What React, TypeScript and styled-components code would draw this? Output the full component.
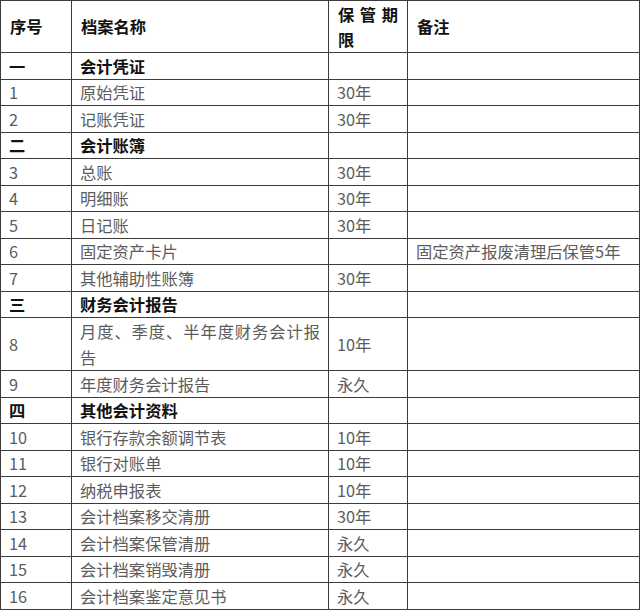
import React from "react";
import styled, { createGlobalStyle } from "styled-components";

const GlobalStyle = createGlobalStyle`
  html, body { margin: 0; padding: 0; background: #ffffff; }
  body { font-family: "Noto Sans CJK SC", "Noto Sans", sans-serif; }
`;

const Page = styled.div`
  width: 640px;
  height: 610px;
  background: #ffffff;
  overflow: hidden;
`;

const Table = styled.table`
  width: 639px;
  border-collapse: collapse;
  table-layout: fixed;
  font-family: "Noto Sans CJK SC", "Noto Sans", sans-serif;
  font-size: 16.3px;
  color: #5a5a5a;
`;

const HeadRow = styled.tr`
  height: 52px;
`;

const Row = styled.tr<{ $double?: boolean }>`
  height: ${(p) => (p.$double ? "52.8px" : "26.5px")};
  line-height: ${(p) => (p.$double ? "26px" : "24px")};
`;

const HeadCell = styled.th`
  border: 1px solid #3c3c3c;
  padding: 0 9px 0 9px;
  text-align: justify;
  text-align-last: left;
  vertical-align: middle;
  font-weight: 700;
  color: #111111;
  line-height: 25px;
`;

const Cell = styled.td<{ $bold?: boolean }>`
  border: 1px solid #3c3c3c;
  padding: 0 8px 0 8px;
  text-align: justify;
  text-align-last: left;
  vertical-align: middle;
  font-weight: ${(p) => (p.$bold ? 700 : 400)};
  color: ${(p) => (p.$bold ? "#111111" : "#5c5c5c")};
  white-space: normal;
  word-break: break-all;
`;

const NoteCell = styled(Cell)`
  padding-left: 8px;
  padding-right: 4px;
  white-space: nowrap;
`;

type Item = {
  no: string;
  name: string;
  term?: string;
  note?: string;
  section?: boolean;
  double?: boolean;
};

const rows: Item[] = [
  { no: "一", name: "会计凭证", section: true },
  { no: "1", name: "原始凭证", term: "30年" },
  { no: "2", name: "记账凭证", term: "30年" },
  { no: "二", name: "会计账簿", section: true },
  { no: "3", name: "总账", term: "30年" },
  { no: "4", name: "明细账", term: "30年" },
  { no: "5", name: "日记账", term: "30年" },
  { no: "6", name: "固定资产卡片", note: "固定资产报废清理后保管5年" },
  { no: "7", name: "其他辅助性账簿", term: "30年" },
  { no: "三", name: "财务会计报告", section: true },
  { no: "8", name: "月度、季度、半年度财务会计报告", term: "10年", double: true },
  { no: "9", name: "年度财务会计报告", term: "永久" },
  { no: "四", name: "其他会计资料", section: true },
  { no: "10", name: "银行存款余额调节表", term: "10年" },
  { no: "11", name: "银行对账单", term: "10年" },
  { no: "12", name: "纳税申报表", term: "10年" },
  { no: "13", name: "会计档案移交清册", term: "30年" },
  { no: "14", name: "会计档案保管清册", term: "永久" },
  { no: "15", name: "会计档案销毁清册", term: "永久" },
  { no: "16", name: "会计档案鉴定意见书", term: "永久" },
];

export default function App() {
  return (
    <Page>
      <GlobalStyle />
      <Table>
        <colgroup>
          <col style={{ width: 71 }} />
          <col style={{ width: 257 }} />
          <col style={{ width: 79 }} />
          <col style={{ width: 232 }} />
        </colgroup>
        <thead>
          <HeadRow>
            <HeadCell>序号</HeadCell>
            <HeadCell>档案名称</HeadCell>
            <HeadCell>保管期限</HeadCell>
            <HeadCell>备注</HeadCell>
          </HeadRow>
        </thead>
        <tbody>
          {rows.map((r) => (
            <Row key={r.no} $double={r.double}>
              <Cell $bold={r.section}>{r.no}</Cell>
              <Cell $bold={r.section}>{r.name}</Cell>
              <Cell>{r.term ?? ""}</Cell>
              <NoteCell>{r.note ?? ""}</NoteCell>
            </Row>
          ))}
        </tbody>
      </Table>
    </Page>
  );
}
